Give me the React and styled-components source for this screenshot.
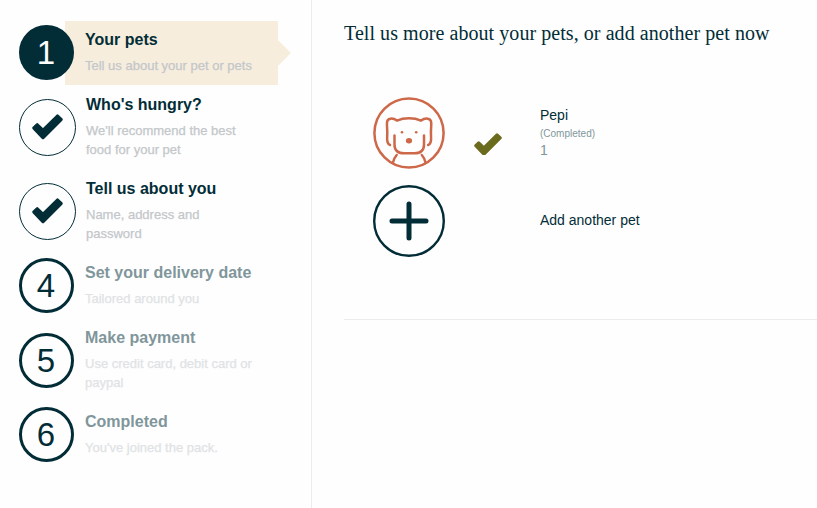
import React from 'react';
import styled, { createGlobalStyle } from 'styled-components';

const NAVY = '#022d37';

const GlobalStyle = createGlobalStyle`
  * { box-sizing: border-box; }
  body {
    margin: 0;
    background: #fefefe;
    color: ${NAVY};
    font-family: "Liberation Sans", Arial, sans-serif;
    overflow: hidden;
  }
`;

const Page = styled.div`
  display: flex;
  width: 817px;
  height: 508px;
`;

const Sidebar = styled.aside`
  width: 312px;
  flex: none;
  padding: 21px 0 0 19px;
  border-right: 1px solid #ececec;
`;

const StepList = styled.ol`
  list-style: none;
  margin: 0;
  padding: 0;
`;

const StepRow = styled.li`
  display: flex;
  align-items: center;
  height: ${({ $tall }) => ($tall ? 84 : 65)}px;
`;

const Marker = styled.div`
  flex: none;
  position: relative;
  z-index: 1;
  width: ${({ $status }) => ($status === 'done' ? 57 : 55)}px;
  height: ${({ $status }) => ($status === 'done' ? 57 : 55)}px;
  margin-top: -2px;
  padding: ${({ $status }) => ($status === 'done' ? '0' : '0 1px 0 0')};
  border: ${({ $status }) => ($status === 'done' ? 1 : 3)}px solid ${NAVY};
  border-radius: 50%;
  display: flex;
  align-items: center;
  justify-content: center;
  background: ${({ $status }) => ($status === 'active' ? NAVY : 'transparent')};
  color: ${({ $status }) => ($status === 'active' ? '#fff' : NAVY)};
  font-size: 33px;
  line-height: 1;
`;

const StepBody = styled.div`
  position: relative;
  align-self: flex-start;
  width: 213px;
  height: ${({ $active }) => ($active ? '64px' : 'auto')};
  margin-left: ${({ $done }) => ($done ? -10 : -9)}px;
  padding: 9px 20px 0;
  background: ${({ $active }) => ($active ? '#f7eddd' : 'transparent')};

  &::after {
    content: '';
    display: ${({ $active }) => ($active ? 'block' : 'none')};
    position: absolute;
    left: 100%;
    top: 19px;
    border-style: solid;
    border-width: 13px 0 13px 13px;
    border-color: transparent transparent transparent #f7eddd;
  }
`;

const StepTitle = styled.h3`
  margin: 0;
  font-size: 16px;
  line-height: 20px;
  font-weight: 700;
  white-space: nowrap;
  color: ${({ $pending }) => ($pending ? '#80969b' : NAVY)};
`;

const StepText = styled.p`
  margin: 6px 0 0;
  font-size: 13px;
  line-height: 19px;
  white-space: pre-line;
  width: 180px;
  -webkit-text-stroke: 0.25px currentColor;
  color: ${({ $pending }) => ($pending ? '#e0e3e5' : '#c3c7ca')};
`;

const Main = styled.main`
  flex: 1;
  min-width: 0;
  padding: 21px 0 0 32px;
`;

const Heading = styled.h1`
  margin: 0;
  font-family: "Liberation Serif", "Times New Roman", serif;
  font-size: 20px;
  font-weight: 400;
  line-height: 24px;
  letter-spacing: 0.06px;
  white-space: nowrap;
`;

const PetList = styled.div`
  height: 275px;
  padding-top: 52px;
  border-bottom: 1px solid #ececec;
`;

const PetRow = styled.div`
  display: grid;
  grid-template-columns: 101px 66px 1fr;
  align-items: center;
  height: 72px;
  margin: 0 0 16px 29px;
`;

const TickSlot = styled.div`
  padding-top: 22px;
  line-height: 0;
`;

const PetInfo = styled.div`
  font-size: 14px;
  line-height: 18px;
  padding-bottom: 2px;
`;

const PetStatus = styled.div`
  padding-top: 2px;
  font-size: 10px;
  line-height: 15px;
  color: #80969b;
`;

const PetCount = styled.div`
  color: #80969b;
`;

const Tick = ({ size, color }) => (
  <svg width={size} height={size * 0.82} viewBox="0 0 31 25.4">
    <path
      d="M2 14 L5.2 10.9 L11 16.5 L25.5 2.1 L29 5.5 L11 23.5 Z"
      fill={color}
      stroke={color}
      strokeWidth="3.4"
      strokeLinejoin="round"
    />
  </svg>
);

const DogIcon = () => (
  <svg width="72" height="72" viewBox="0 0 72 72" fill="none" stroke="#cd6849" strokeWidth="2.5" strokeLinecap="round">
    <circle cx="36" cy="36" r="34.6" />
    <path d="M17 48 C14 47 13.8 43.5 14.2 38.5 C14.6 33 13.7 30 14 25.5 C14.3 21 19.5 20.4 24 23.6 C31 20.5 41 20.5 48 23.6 C52.5 20.4 57.9 21 58.2 25.5 C58.5 30 57.6 33 58 38.5 C58.4 43.5 58.2 47 55.2 48" />
    <path d="M21.5 38.5 V47.5 C21.5 53.5 25 56.3 31 56.3 H41.5 C47.5 56.3 51 53.5 51 47.5 V38.5" />
    <path d="M23.7 58 C21.5 60.5 20.3 63 19.8 66 M48.8 58 C51 60.5 52.2 63 52.7 66" />
    <ellipse cx="36" cy="43.7" rx="3.1" ry="2.7" fill="#cd6849" stroke="none" />
    <circle cx="29" cy="35.2" r="1.3" fill="#cd6849" stroke="none" />
    <circle cx="43.2" cy="35.2" r="1.3" fill="#cd6849" stroke="none" />
  </svg>
);

const AddIcon = () => (
  <svg width="72" height="72" viewBox="0 0 72 72" fill="none" stroke={NAVY}>
    <circle cx="36" cy="36" r="34.8" strokeWidth="2.4" />
    <path d="M36 19 V53 M19 36 H53" strokeWidth="5" strokeLinecap="round" />
  </svg>
);

const steps = [
  { status: 'active', title: 'Your pets', text: 'Tell us about your pet or pets' },
  { status: 'done', title: "Who's hungry?", text: "We'll recommend the best\nfood for your pet", tall: true },
  { status: 'done', title: 'Tell us about you', text: 'Name, address and\npassword', tall: true },
  { status: 'pending', title: 'Set your delivery date', text: 'Tailored around you' },
  { status: 'pending', title: 'Make payment', text: 'Use credit card, debit card or\npaypal', tall: true },
  { status: 'pending', title: 'Completed', text: "You've joined the pack." },
];

const Step = ({ number, status, title, text, tall }) => (
  <StepRow $tall={tall}>
    <Marker $status={status}>{status === 'done' ? <Tick size={31} color={NAVY} /> : number}</Marker>
    <StepBody $active={status === 'active'} $done={status === 'done'}>
      <StepTitle $pending={status === 'pending'}>{title}</StepTitle>
      <StepText $pending={status === 'pending'}>{text}</StepText>
    </StepBody>
  </StepRow>
);

export default function App() {
  return (
    <Page>
      <GlobalStyle />
      <Sidebar>
        <StepList>
          {steps.map((step, i) => (
            <Step key={step.title} number={i + 1} {...step} />
          ))}
        </StepList>
      </Sidebar>
      <Main>
        <Heading>Tell us more about your pets, or add another pet now</Heading>
        <PetList>
          <PetRow>
            <DogIcon />
            <TickSlot>
              <Tick size={28} color="#6b6b1e" />
            </TickSlot>
            <PetInfo>
              Pepi
              <PetStatus>(Completed)</PetStatus>
              <PetCount>1</PetCount>
            </PetInfo>
          </PetRow>
          <PetRow>
            <AddIcon />
            <span />
            <PetInfo>Add another pet</PetInfo>
          </PetRow>
        </PetList>
      </Main>
    </Page>
  );
}
